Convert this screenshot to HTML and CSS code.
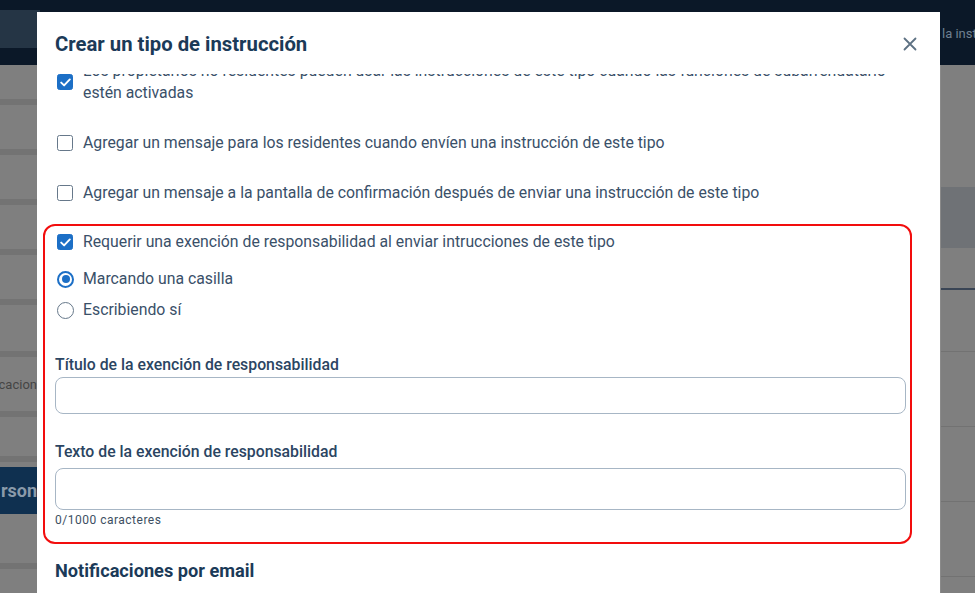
FILE: index.html
```html
<!DOCTYPE html>
<html lang="es">
<head>
<meta charset="utf-8">
<title>Crear un tipo de instrucción</title>
<link rel="stylesheet" href="styles.css">
</head>
<body>
<div class="page">
  <div class="topbar">
    <div class="topbar-left"></div>
    <div class="topbar-right">la inst</div>
  </div>
  <div class="bg-content">
    <div class="bg-col left">
      <div class="bg-row h30"></div>
      <div class="bg-row h50"></div>
      <div class="bg-row h50"></div>
      <div class="bg-row h50"></div>
      <div class="bg-row h50"></div>
      <div class="bg-row h52"></div>
      <div class="bg-row h55 txt">cacion</div>
      <div class="bg-row h45"></div>
      <div class="bg-row blue">rson</div>
      <div class="bg-row h45"></div>
      <div class="bg-row h45"></div>
    </div>
    <div class="bg-mid"></div>
    <div class="bg-col right">
      <div class="bg-blk h122"></div>
      <div class="bg-blk shade h61"></div>
      <div class="bg-blk h42"></div>
      <div class="bg-blk dark-line h62"></div>
      <div class="bg-blk h75"></div>
      <div class="bg-blk h75"></div>
      <div class="bg-blk h75"></div>
    </div>
  </div>

  <div class="modal" role="dialog" aria-label="Crear un tipo de instrucción">
    <div class="modal-header">
      <h2 class="modal-title">Crear un tipo de instrucción</h2>
      <button class="close-btn" aria-label="Cerrar">
        <svg width="14" height="14" viewBox="0 0 14 14"><path d="M1.5 1.5 L12.5 12.5 M12.5 1.5 L1.5 12.5" stroke="#5d7183" stroke-width="1.8" stroke-linecap="round" fill="none"/></svg>
      </button>
    </div>
    <div class="modal-body">
      <label class="check-row first">
        <span class="cb checked"><svg width="11" height="9" viewBox="0 0 11 9"><path d="M1.2 4.6 L4.1 7.4 L9.8 1.4" stroke="#fff" stroke-width="1.9" fill="none" stroke-linecap="round" stroke-linejoin="round"/></svg></span>
        <span class="check-text">Los propietarios no residentes pueden usar las instrucciones de este tipo cuando las funciones de subarrendatario estén activadas</span>
      </label>
      <label class="check-row">
        <span class="cb"></span>
        <span class="check-text">Agregar un mensaje para los residentes cuando envíen una instrucción de este tipo</span>
      </label>
      <label class="check-row">
        <span class="cb"></span>
        <span class="check-text">Agregar un mensaje a la pantalla de confirmación después de enviar una instrucción de este tipo</span>
      </label>

      <div class="highlight">
        <label class="check-row">
          <span class="cb checked"><svg width="11" height="9" viewBox="0 0 11 9"><path d="M1.2 4.6 L4.1 7.4 L9.8 1.4" stroke="#fff" stroke-width="1.9" fill="none" stroke-linecap="round" stroke-linejoin="round"/></svg></span>
          <span class="check-text">Requerir una exención de responsabilidad al enviar intrucciones de este tipo</span>
        </label>
        <div class="radios">
          <label class="radio-row">
            <span class="rb checked"></span>
            <span class="check-text">Marcando una casilla</span>
          </label>
          <label class="radio-row">
            <span class="rb"></span>
            <span class="check-text">Escribiendo sí</span>
          </label>
        </div>
        <div class="field first-field">
          <span class="field-label">Título de la exención de responsabilidad</span>
          <div class="input"></div>
        </div>
        <div class="field second-field">
          <span class="field-label">Texto de la exención de responsabilidad</span>
          <div class="input tall"></div>
          <span class="counter">0/1000 caracteres</span>
        </div>
      </div>

      <h3 class="section-title">Notificaciones por email</h3>
    </div>
  </div>
</div>
</body>
</html>
```

FILE: styles.css
```css
* { box-sizing: border-box; }
html, body { margin: 0; padding: 0; }
body {
  width: 975px;
  height: 593px;
  overflow: hidden;
  background: #7f7f7f;
  font-family: Roboto, "Noto Sans", "Liberation Sans", sans-serif;
}
.page {
  position: relative;
  width: 975px;
  height: 593px;
  overflow: hidden;
}

/* Background (dimmed app) */
.topbar {
  height: 65px;
  background: #0b1828;
  display: flex;
  justify-content: space-between;
  padding-top: 10px;
}
.topbar-left {
  width: 40px;
  height: 38px;
  background: #253545;
}
.topbar-right {
  width: 35px;
  overflow: hidden;
  white-space: nowrap;
  color: #6f8091;
  font-size: 13px;
  padding-top: 16px;
  padding-left: 2px;
}
.bg-content {
  display: flex;
  height: 528px;
}
.bg-col { width: 37px; }
.bg-col.right { width: 35px; border-left: 1px solid #8a8a8a; }
.bg-mid { flex: 1; }
.bg-row {
  border-bottom: 6px solid #737373;
}
.bg-row.h30 { height: 40px; }
.bg-row.h50 { height: 50px; }
.bg-row.h52 { height: 52px; }
.bg-row.h45 { height: 45px; }
.bg-row.h55 { height: 60px; }
.bg-row.txt {
  color: #454545;
  font-size: 13px;
  display: flex;
  align-items: center;
  white-space: nowrap;
  overflow: hidden;
  justify-content: flex-end;
}
.bg-row.blue {
  height: 47px;
  background: #0f3050;
  border-bottom: none;
  margin-top: 5px;
  color: #8a9aaa;
  font-weight: 700;
  font-size: 18px;
  display: flex;
  align-items: center;
  justify-content: flex-end;
  overflow: hidden;
  margin-bottom: 10px;
}
.bg-blk { border-bottom: 1px solid #727272; }
.bg-blk.h122 { height: 122px; border-bottom: none; }
.bg-blk.h61 { height: 61px; }
.bg-blk.shade { background: #6f7276; border-bottom: none; }
.bg-blk.h42 { height: 42px; border-bottom: 2px solid #3a4555; }
.bg-blk.h62 { height: 62px; }
.bg-blk.h75 { height: 75px; }

/* Modal */
.modal {
  position: absolute;
  left: 37px;
  top: 12px;
  width: 903px;
  height: 600px;
  background: #ffffff;
  border-radius: 9px 9px 0 0;
  display: flex;
  flex-direction: column;
}
.modal-header {
  height: 62px;
  flex: none;
  display: flex;
  align-items: flex-start;
  justify-content: space-between;
  padding: 20px 23px 0 18px;
  background: #fff;
}
.modal-title {
  margin: 0;
  font-size: 20.3px;
  line-height: 24px;
  font-weight: 700;
  color: #1b3a58;
}
.close-btn {
  border: none;
  background: none;
  padding: 0;
  margin-top: 5px;
  width: 14px;
  height: 14px;
  display: flex;
}
.modal-body {
  flex: 1;
  overflow: hidden;
  padding: 0 34px 0 18px;
  display: flex;
  flex-direction: column;
}

.check-row, .radio-row {
  display: flex;
  align-items: center;
  gap: 10px;
  font-size: 15.8px;
  line-height: 22px;
  color: #3a5069;
  padding-left: 2px;
}
.check-row { margin-top: 28px; }
.check-row.first { margin-top: -14px; }
.check-text { display: block; }

.cb {
  flex: none;
  width: 16px;
  height: 16px;
  border: 1.6px solid #66788a;
  border-radius: 2.5px;
  display: flex;
  align-items: center;
  justify-content: center;
  background: #fff;
}
.cb.checked {
  background: #1c6fc6;
  border-color: #1c6fc6;
}

.rb {
  flex: none;
  width: 17px;
  height: 17px;
  border-radius: 50%;
  border: 1.6px solid #66788a;
  display: flex;
  align-items: center;
  justify-content: center;
}
.rb.checked { border: 2px solid #1c6fc6; }
.rb.checked::after {
  content: "";
  width: 8px;
  height: 8px;
  border-radius: 50%;
  background: #1c6fc6;
}
.radio-row { gap: 9px; }

.highlight {
  margin: 20px -6px 0 -12px;
  border: 2px solid #f20d0d;
  border-radius: 12px;
  padding: 5px 4px 15px 10px;
  display: flex;
  flex-direction: column;
}
.highlight .check-row { margin-top: 0; }
.radios {
  display: flex;
  flex-direction: column;
  gap: 9px;
  margin-top: 15px;
}

.field {
  display: flex;
  flex-direction: column;
}
.first-field { margin-top: 34px; gap: 2px; }
.second-field { margin-top: 28px; gap: 6px; }
.field-label {
  font-size: 15.8px;
  line-height: 20px;
  font-weight: 500;
  color: #2b4562;
}
.input {
  height: 37px;
  border: 1.5px solid #a7b6c5;
  border-radius: 8px;
  background: #fff;
}
.input.tall { height: 42px; }
.counter {
  font-size: 12px;
  line-height: 14px;
  color: #3d4f62;
  margin-top: -3px;
  letter-spacing: 0.5px;
}

.section-title {
  margin: 16px 0 0;
  font-size: 18.2px;
  line-height: 22px;
  font-weight: 700;
  color: #1b3a58;
}
```
